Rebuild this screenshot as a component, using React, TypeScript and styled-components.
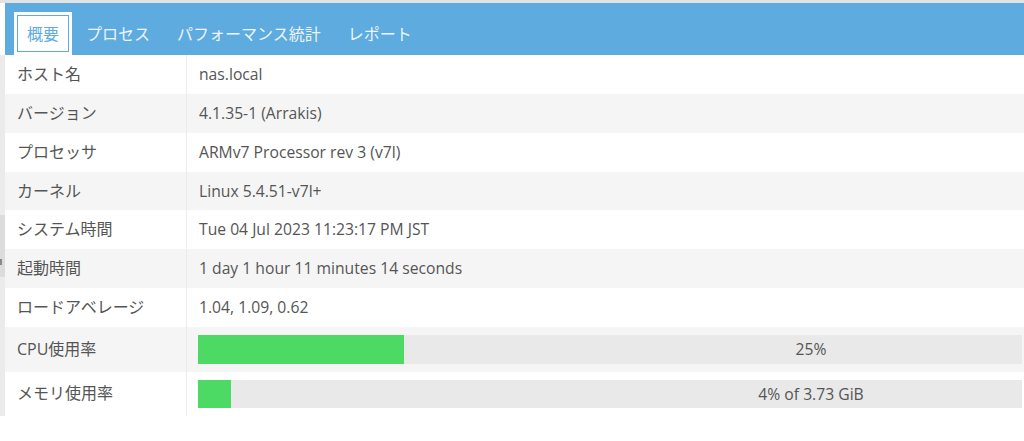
import React from 'react';
import styled, { createGlobalStyle, css } from 'styled-components';

const GlobalStyle = createGlobalStyle`
  html, body {
    margin: 0;
    padding: 0;
    background: #ffffff;
  }
  body {
    font-family: 'Open Sans', 'Noto Sans CJK JP', sans-serif;
    font-size: 16px;
    color: #555555;
  }
`;

const Page = styled.div`
  width: 1024px;
  height: 441px;
  overflow: hidden;
  background: #ffffff;
`;

const TopLine = styled.div`
  height: 3px;
  background: #e2e2e2;
`;

const Body = styled.div`
  display: flex;
`;

const Sidebar = styled.div`
  width: 5px;
  flex: none;
  display: flex;
  flex-direction: column;
`;

const SidebarTop = styled.div`
  height: 52px;
  background: #ffffff;
`;

const SidebarStrip = styled.div`
  height: 361px;
  background: #ebebeb;
  display: flex;
  flex-direction: column;
`;

const Handle = styled.div`
  margin-top: 160px;
  height: 62px;
  background: #dcdcdc;
  display: flex;
  flex-direction: column;
`;

const HandleMark = styled.div`
  margin-top: 44px;
  width: 2px;
  height: 6px;
  background: #8a8a8a;
`;

const Main = styled.div`
  flex: 1;
  min-width: 0;
`;

const TabBar = styled.div`
  height: 52px;
  background: #5dabdf;
  display: flex;
  align-items: flex-end;
  padding-left: 9px;
  gap: 1px;
`;

const Tab = styled.div<{ $active?: boolean }>`
  height: 43px;
  padding: 0 13px 2px;
  box-sizing: border-box;
  display: flex;
  align-items: center;
  font-size: 16px;
  color: #eef5fb;
  white-space: nowrap;
  ${p => p.$active && css`
    background: #ffffff;
    color: #5dabdf;
    box-shadow: inset 0 0 0 3px #ffffff, inset 0 0 0 4px #5dabdf;
  `}
`;

const Table = styled.table`
  width: 100%;
  border-collapse: collapse;
  border-spacing: 0;
`;

const Row = styled.tr`
  &:nth-child(even) {
    background: #f5f5f5;
  }
`;

const LabelCell = styled.td`
  width: 169px;
  padding: 8px 0 8px 12px;
  line-height: 22.86px;
  border-right: 1px solid #ececec;
  vertical-align: middle;
  white-space: nowrap;
`;

const ValueCell = styled.td`
  padding: 8px 2px 8px 12px;
  font-size: 15.7px;
  line-height: 22.86px;
  vertical-align: middle;
  white-space: nowrap;
`;

const BarCell = styled(ValueCell)`
  padding-left: 11px;
`;

const Progress = styled.div`
  position: relative;
  height: 28.6px;
  background: #e9e9e9;
  overflow: hidden;
`;

const Fill = styled.div`
  height: 100%;
  background: #4cd964;
`;

const BarLabel = styled.div`
  position: absolute;
  top: 0;
  bottom: 0;
  left: 48.8%;
  right: 0;
  text-align: center;
  line-height: 28.6px;
  color: #555555;
`;

const tabs = ['概要', 'プロセス', 'パフォーマンス統計', 'レポート'];

const info = [
  { label: 'ホスト名', value: 'nas.local' },
  { label: 'バージョン', value: '4.1.35-1 (Arrakis)' },
  { label: 'プロセッサ', value: 'ARMv7 Processor rev 3 (v7l)' },
  { label: 'カーネル', value: 'Linux 5.4.51-v7l+' },
  { label: 'システム時間', value: 'Tue 04 Jul 2023 11:23:17 PM JST' },
  { label: '起動時間', value: '1 day 1 hour 11 minutes 14 seconds' },
  { label: 'ロードアベレージ', value: '1.04, 1.09, 0.62' },
];

const usage = [
  { label: 'CPU使用率', percent: 25, text: '25%' },
  { label: 'メモリ使用率', percent: 4, text: '4% of 3.73 GiB' },
];

const App: React.FC = () => {
  return (
    <Page>
      <GlobalStyle />
      <TopLine />
      <Body>
        <Sidebar>
          <SidebarTop />
          <SidebarStrip>
            <Handle>
              <HandleMark />
            </Handle>
          </SidebarStrip>
        </Sidebar>
        <Main>
          <TabBar>
            {tabs.map((tab, i) => (
              <Tab key={tab} $active={i === 0}>{tab}</Tab>
            ))}
          </TabBar>
          <Table>
            <tbody>
              {info.map(row => (
                <Row key={row.label}>
                  <LabelCell>{row.label}</LabelCell>
                  <ValueCell>{row.value}</ValueCell>
                </Row>
              ))}
              {usage.map(row => (
                <Row key={row.label}>
                  <LabelCell>{row.label}</LabelCell>
                  <BarCell>
                    <Progress>
                      <Fill style={{ width: `${row.percent}%` }} />
                      <BarLabel>{row.text}</BarLabel>
                    </Progress>
                  </BarCell>
                </Row>
              ))}
            </tbody>
          </Table>
        </Main>
      </Body>
    </Page>
  );
};

export default App;
